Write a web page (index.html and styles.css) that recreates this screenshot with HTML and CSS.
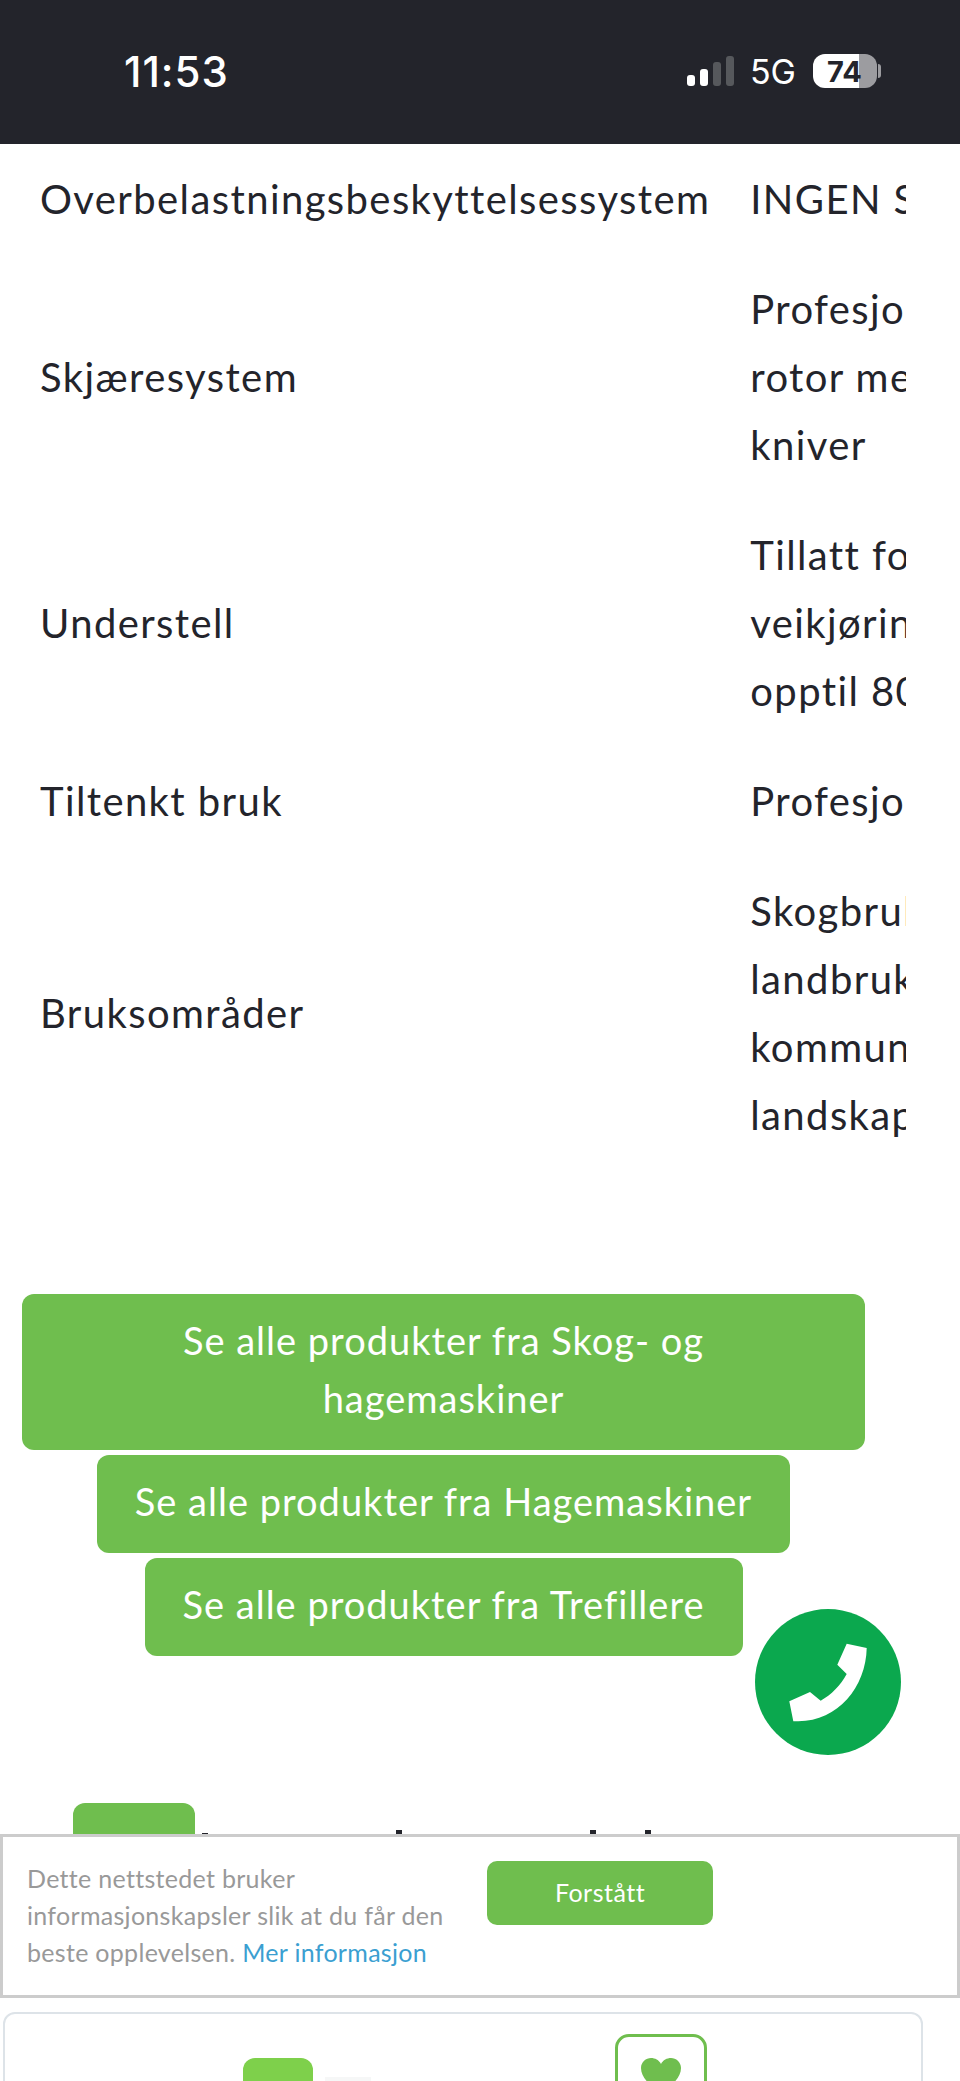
FILE: index.html
```html
<!DOCTYPE html>
<html lang="no">
<head>
  <meta charset="UTF-8">
  <title>Produkt</title>
  <link rel="stylesheet" href="styles.css">
</head>
<body>

  <div class="statusbar">
    <span class="clock">11:53</span>
    <div class="status-right">
      <div class="signal">
        <span class="bar bar1"></span>
        <span class="bar bar2"></span>
        <span class="bar bar3 off"></span>
        <span class="bar bar4 off"></span>
      </div>
      <span class="net">5G</span>
      <div class="battery"><span class="battery-num">74</span></div>
      <span class="battery-nub"></span>
    </div>
  </div>

  <div class="table-wrap">
    <table class="specs">
      <tr>
        <td class="name">Overbelastningsbeskyttelsessystem</td>
        <td>INGEN SYSTEM</td>
      </tr>
      <tr>
        <td class="name">Skjæresystem</td>
        <td>Profesjonell<br>rotor med<br>kniver</td>
      </tr>
      <tr>
        <td class="name">Understell</td>
        <td>Tillatt for<br>veikjøring<br>opptil 80 km/t</td>
      </tr>
      <tr>
        <td class="name">Tiltenkt bruk</td>
        <td>Profesjonell</td>
      </tr>
      <tr>
        <td class="name">Bruksområder</td>
        <td>Skogbruk,<br>landbruk,<br>kommuner,<br>landskapspleie</td>
      </tr>
    </table>
  </div>

  <div class="links">
    <a class="btn btn-wide" href="#">Se alle produkter fra Skog- og<br>hagemaskiner</a>
    <a class="btn" href="#">Se alle produkter fra Hagemaskiner</a>
    <a class="btn" href="#">Se alle produkter fra Trefillere</a>
  </div>

  <div class="next-section">
    <div class="next-thumb"></div>
    <div class="next-ticks">
      <span class="tick tick-low"></span>
      <span class="tick tick-b"></span>
      <span class="tick tick-c"></span>
      <span class="tick tick-d"></span>
    </div>
  </div>

  <!-- ring-knapp -->
  <a class="call" href="#">
    <svg viewBox="0 0 146 146" width="146" height="146">
      <circle cx="73" cy="73" r="73" fill="#0ba84e"/>
      <path d="M91.7 34.7 L111.7 39 C111 78 83 112 43.3 112.3 L38.3 112.3 L34.3 92.3 L55 83 L65.7 91.7 C76 86 86 76 91.7 65 L82.3 55.7 Z" fill="#fff"/>
    </svg>
  </a>

  <div class="cookie">
    <p class="cookie-text">Dette nettstedet bruker informasjonskapsler slik at du får den beste opplevelsen. <a href="#">Mer informasjon</a></p>
    <a class="cookie-btn" href="#">Forstått</a>
  </div>

  <div class="bottom-card">
    <div class="card-thumb"></div>
    <div class="card-label"></div>
    <div class="card-fav">
      <svg viewBox="0 0 40 36" width="40" height="36">
        <path d="M20 36 C10 28 0 20 0 10 C0 4 5 0 10 0 C14 0 18 2 20 6 C22 2 26 0 30 0 C35 0 40 4 40 10 C40 20 30 28 20 36 Z" fill="#6fbe4e"/>
      </svg>
    </div>
  </div>

</body>
</html>
```

FILE: styles.css
```css
body {
  margin: 0;
  height: 2081px;
  overflow: hidden;
  position: relative;
  background-color: #fff;
  font-family: Lato, sans-serif;
  color: #23242b;
}

.statusbar {
  height: 144px;
  background-color: #23242b;
  color: #fff;
  display: flex;
  justify-content: space-between;
  align-items: center;
  padding: 0 79px 2px 124px;
  box-sizing: border-box;
  font-family: Inter, sans-serif;
}

.clock {
  font-size: 42px;
  font-weight: 500;
  letter-spacing: 1px;
}

.status-right {
  display: flex;
  align-items: center;
}

.signal {
  display: flex;
  align-items: flex-end;
  gap: 5px;
  height: 30px;
  margin-right: 16px;
}

.bar {
  width: 8px;
  border-radius: 3px;
  background-color: #fff;
}

.bar1 { height: 11px; }
.bar2 { height: 17px; }
.bar3 { height: 24px; }
.bar4 { height: 30px; }

.bar.off {
  background-color: #56585c;
}

.net {
  font-size: 34px;
  margin-right: 17px;
}

.battery {
  width: 64px;
  height: 34px;
  border-radius: 12px;
  background: linear-gradient(to right, #fff 72%, #9c9ca0 72%);
  color: #23242b;
  display: flex;
  align-items: center;
  padding-left: 14px;
  box-sizing: border-box;
}

.battery-num {
  font-size: 29px;
  font-weight: 700;
}

.battery-nub {
  width: 3px;
  height: 14px;
  margin-left: 1px;
  border-radius: 0 3px 3px 0;
  background-color: #9c9ca0;
}

.table-wrap {
  margin: 0 54px 0 40px;
  overflow: hidden;
}

.specs {
  border-collapse: collapse;
  font-size: 40px;
  line-height: 68px;
  letter-spacing: 1.4px;
  white-space: nowrap;
}

.specs td {
  padding: 21px 0;
}

.specs .name {
  padding-right: 40px;
}

.links {
  margin-top: 124px;
  width: 887px;
  display: flex;
  flex-direction: column;
  align-items: center;
  gap: 5px;
}

.btn {
  display: block;
  background-color: #6fbe4e;
  color: #fff;
  text-align: center;
  text-decoration: none;
  font-size: 38px;
  line-height: 58px;
  letter-spacing: 1px;
  padding: 17px 38px 23px;
  border-radius: 12px;
}

.btn-wide {
  width: 843px;
  padding: 17px 0 23px;
}

.next-section {
  margin: 147px 0 0 73px;
  display: flex;
  height: 40px;
}

.next-thumb {
  width: 122px;
  height: 40px;
  background-color: #6fbe4e;
  border-radius: 12px 12px 0 0;
}

.next-ticks {
  display: flex;
  align-items: flex-start;
  padding-top: 27px;
}

.tick {
  width: 6px;
  height: 6px;
  background-color: #23242b;
}

.tick-low {
  margin-left: 7px;
  margin-top: 3px;
  height: 3px;
}

.tick-b { margin-left: 188px; }
.tick-c { margin-left: 188px; }
.tick-d { margin-left: 49px; }

.call {
  position: absolute;
  left: 755px;
  top: 1609px;
  display: block;
  height: 146px;
}

.cookie {
  position: absolute;
  left: 0;
  right: 0;
  top: 1834px;
  height: 164px;
  box-sizing: border-box;
  background-color: #fff;
  border: 3px solid #ccc;
  padding: 23px 0 0 24px;
  display: flex;
  align-items: flex-start;
}

.cookie-text {
  margin: 0;
  width: 436px;
  font-size: 25px;
  line-height: 37px;
  letter-spacing: 0.3px;
  color: #999;
}

.cookie-text a {
  color: #3b9fd1;
  text-decoration: none;
}

.cookie-btn {
  margin-left: 24px;
  margin-top: 1px;
  width: 226px;
  height: 64px;
  line-height: 62px;
  text-align: center;
  background-color: #6fbe4e;
  color: #fff;
  font-size: 25px;
  letter-spacing: 0.5px;
  border-radius: 10px;
  text-decoration: none;
}

.bottom-card {
  position: absolute;
  left: 3px;
  top: 2012px;
  width: 920px;
  height: 120px;
  box-sizing: border-box;
  background-color: #fff;
  border: 2px solid #dde3e8;
  border-radius: 12px;
}

.card-thumb {
  position: absolute;
  left: 238px;
  top: 44px;
  width: 70px;
  height: 60px;
  background-color: #7ed04b;
  border-radius: 12px;
}

.card-label {
  position: absolute;
  left: 320px;
  top: 63px;
  width: 46px;
  height: 6px;
  background-color: #f6f7f7;
}

.card-fav {
  position: absolute;
  left: 610px;
  top: 20px;
  width: 92px;
  height: 80px;
  box-sizing: border-box;
  border: 3px solid #6fbe4e;
  border-radius: 14px;
  display: flex;
  justify-content: center;
  padding-top: 21px;
}
```
